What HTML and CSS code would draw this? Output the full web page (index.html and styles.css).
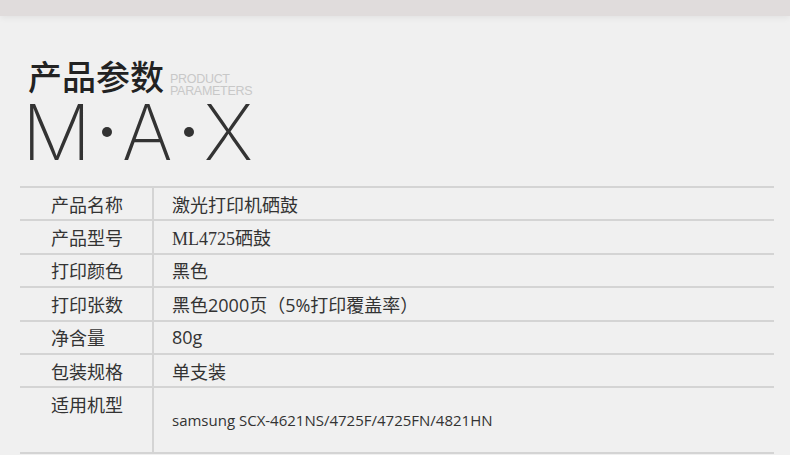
FILE: index.html
```html
<!DOCTYPE html>
<html lang="zh-CN">
<head>
    <meta charset="UTF-8">
    <meta name="viewport" content="width=device-width, initial-scale=1.0">
    <title>产品参数</title>
    <link rel="stylesheet" href="styles.css">
</head>
<body>
    <div class="top-bar"></div>

    <div class="heading">
        <div class="title-line">
            <h1>产品参数</h1>
            <div class="title-en">PRODUCT<br>PARAMETERS</div>
        </div>
        <div class="brand">
            <span class="letter">M</span><span class="dot"></span><span class="letter">A</span><span class="dot"></span><span class="letter">X</span>
        </div>
    </div>

    <div class="spec-table">
        <div class="spec-row">
            <div class="spec-label">产品名称</div>
            <div class="spec-value">激光打印机硒鼓</div>
        </div>
        <div class="spec-row">
            <div class="spec-label">产品型号</div>
            <div class="spec-value serif">ML4725硒鼓</div>
        </div>
        <div class="spec-row">
            <div class="spec-label">打印颜色</div>
            <div class="spec-value">黑色</div>
        </div>
        <div class="spec-row">
            <div class="spec-label">打印张数</div>
            <div class="spec-value">黑色2000页（5%打印覆盖率）</div>
        </div>
        <div class="spec-row">
            <div class="spec-label">净含量</div>
            <div class="spec-value">80g</div>
        </div>
        <div class="spec-row">
            <div class="spec-label">包装规格</div>
            <div class="spec-value">单支装</div>
        </div>
        <div class="spec-row tall">
            <div class="spec-label">适用机型</div>
            <div class="spec-value models">samsung SCX-4621NS/4725F/4725FN/4821HN</div>
        </div>
    </div>
</body>
</html>
```

FILE: styles.css
```css
body {
    margin: 0;
    background-color: #f0f0f0;
    font-family: "Open Sans", "Noto Sans CJK SC", sans-serif;
    color: #333;
    overflow: hidden;
}
.top-bar {
    height: 16px;
    background-color: #e0dcdc;
    box-shadow: 0 2px 6px rgba(0,0,0,0.06);
}
.heading {
    padding: 40px 0 0 28px;
}
.title-line {
    display: flex;
    align-items: flex-end;
}
h1 {
    margin: 0;
    font-family: "Noto Sans CJK SC", sans-serif;
    font-size: 34px;
    font-weight: 500;
    line-height: 40px;
    color: #222;
}
.title-en {
    margin: 0 0 -1px 6px;
    font-family: "Liberation Sans", Arial, sans-serif;
    font-size: 12.5px;
    line-height: 12px;
    color: #c8c8c8;
    letter-spacing: -0.3px;
}
.brand {
    display: flex;
    align-items: flex-start;
    height: 57px;
    margin: 8px 0 0 -6px;
    overflow: hidden;
}
.letter {
    font-family: Inter, "Liberation Sans", sans-serif;
    font-weight: 200;
    font-size: 77px;
    line-height: 56px;
    color: #333;
}
.dot {
    flex-shrink: 0;
    width: 10px;
    height: 10px;
    margin: 23px 10px 0 11px;
    border-radius: 50%;
    background-color: #333;
}
.spec-table {
    margin: 25px 16px 0 20px;
    border-bottom: 2px solid #d4d4d4;
}
.spec-row {
    display: grid;
    grid-template-columns: 132px 1fr;
    height: 33.4px;
    box-sizing: border-box;
    border-top: 2px solid #d4d4d4;
    font-size: 18px;
}
.spec-row.tall {
    height: 66px;
}
.spec-label {
    display: flex;
    align-items: center;
    padding-left: 31px;
}
.spec-value {
    display: flex;
    align-items: center;
    padding-left: 18px;
    border-left: 2px solid #d4d4d4;
}
.spec-value.serif {
    font-family: "Liberation Serif", "Noto Sans CJK SC", serif;
}
.tall .spec-label {
    align-items: flex-start;
    padding-top: 3px;
}
.spec-value.models {
    font-size: 15px;
}
```
